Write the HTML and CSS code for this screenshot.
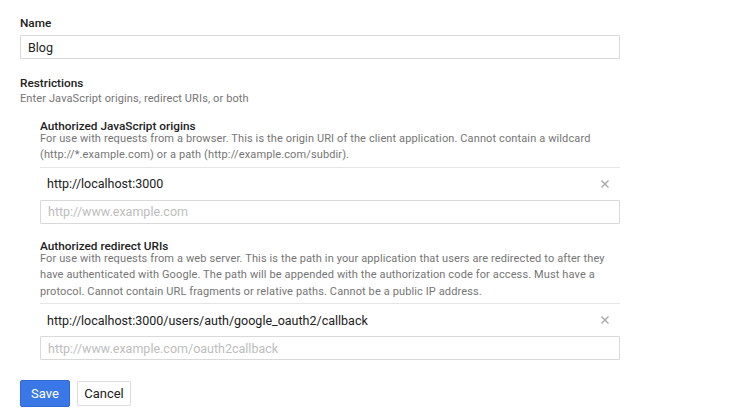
FILE: index.html
```html
<!DOCTYPE html>
<html>
<head>
<meta charset="utf-8">
<link rel="stylesheet" href="styles.css">
</head>
<body>
<form class="form">
  <div class="label name-label">Name</div>
  <div class="input"><span class="value">Blog</span></div>

  <div class="label restrictions-label">Restrictions</div>
  <div class="desc">Enter JavaScript origins, redirect URIs, or both</div>

  <div class="section">
    <div class="label">Authorized JavaScript origins</div>
    <div class="desc">For use with requests from a browser. This is the origin URI of the client application. Cannot contain a wildcard (http://*.example.com) or a path (http://example.com/subdir).</div>
    <div class="row"><span class="row-text">http://localhost:3000</span><svg class="close" width="8" height="8" viewBox="0 0 8 8"><path d="M0.5 0.5L7.5 7.5M7.5 0.5L0.5 7.5"/></svg></div>
    <div class="input"><span class="placeholder">http://www.example.com</span></div>
  </div>

  <div class="section section2">
    <div class="label">Authorized redirect URIs</div>
    <div class="desc">For use with requests from a web server. This is the path in your application that users are redirected to after they have authenticated with Google. The path will be appended with the authorization code for access. Must have a protocol. Cannot contain URL fragments or relative paths. Cannot be a public IP address.</div>
    <div class="row"><span class="row-text">http://localhost:3000/users/auth/google_oauth2/callback</span><svg class="close" width="8" height="8" viewBox="0 0 8 8"><path d="M0.5 0.5L7.5 7.5M7.5 0.5L0.5 7.5"/></svg></div>
    <div class="input"><span class="placeholder">http://www.example.com/oauth2callback</span></div>
  </div>

  <div class="buttons">
    <span class="btn btn-primary">Save</span>
    <span class="btn btn-default">Cancel</span>
  </div>
</form>
</body>
</html>
```

FILE: styles.css
```css
html, body {
  margin: 0;
  padding: 0;
  background: #fff;
}
body {
  font-family: Roboto, "Liberation Sans", Arial, sans-serif;
  color: #212121;
}
.form {
  width: 600px;
  padding: 15px 0 0 20px;
}
.label {
  font-size: 11.8px;
  font-weight: 500;
  line-height: 16px;
  color: #212121;
}
.input {
  box-sizing: border-box;
  height: 24px;
  border: 1px solid #d9d9d9;
  border-radius: 1px;
  padding: 0 7px;
  display: flex;
  align-items: center;
  font-size: 12.5px;
}
.name-label {
  margin-bottom: 4px;
}
.value {
  color: #212121;
}
.placeholder {
  color: #bdbdbd;
}
.restrictions-label {
  margin-top: 16px;
}
.desc {
  font-size: 11px;
  line-height: 16.5px;
  letter-spacing: 0.12px;
  color: #757575;
}
.section {
  margin-left: 20px;
  margin-top: 10px;
}
.section2 {
  margin-top: 14px;
}
.section .desc {
  margin-top: -3px;
  padding-bottom: 3px;
  border-bottom: 1px solid #e5e5e5;
}
.row {
  height: 32px;
  display: flex;
  align-items: center;
  justify-content: space-between;
  padding: 0 11px 0 7px;
  font-size: 12.5px;
  color: #212121;
}
.close {
  display: block;
  stroke: #a8a8a8;
  stroke-width: 1.4;
  fill: none;
}
.buttons {
  display: flex;
  gap: 7px;
  margin-top: 20px;
  align-items: center;
}
.btn {
  box-sizing: border-box;
  font-size: 13px;
  border-radius: 2px;
  display: inline-flex;
  align-items: center;
  justify-content: center;
}
.btn-primary {
  width: 50px;
  height: 27px;
  background: #3b78e7;
  border: 1px solid #3367d6;
  color: #fff;
}
.btn-default {
  width: 54px;
  height: 25px;
  background: #fff;
  border: 1px solid #dcdcdc;
  color: #212121;
}
```
